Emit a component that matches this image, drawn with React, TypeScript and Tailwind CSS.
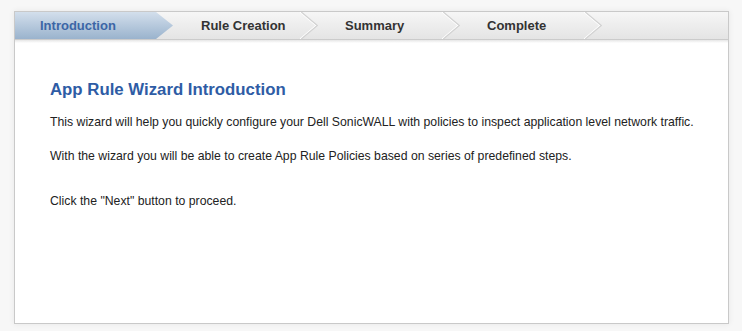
import React from "react";

const steps = [
  { label: "Introduction", w: "w-[158px]", pl: "pl-[25px]", active: true },
  { label: "Rule Creation", w: "w-[145px]", pl: "pl-[28px]", active: false },
  { label: "Summary", w: "w-[142px]", pl: "pl-[27px]", active: false },
  { label: "Complete", w: "w-[142px]", pl: "pl-[27px]", active: false },
];

function Chevron() {
  return (
    <svg width="18" height="27" viewBox="0 0 18 27" className="shrink-0">
      <polyline points="0,0 16,13.5 0,27" fill="none" stroke="#ffffff" strokeWidth="1.2" />
      <polyline points="1.3,0 17.3,13.5 1.3,27" fill="none" stroke="#d2d2d2" strokeWidth="1.2" />
    </svg>
  );
}

export default function App() {
  return (
    <div className="w-[742px] h-[331px] bg-[#f7f7f7] pt-[11px] pl-[14px] overflow-hidden" style={{ fontFamily: '"Liberation Sans", Arial, sans-serif' }}>
      <div className="w-[715px] h-[313px] border border-[#c9c9c9] bg-white shadow-[0_0_6px_rgba(0,0,0,0.07)] flex flex-col">
        <div className="h-[28px] flex border-b border-[#cbcbcb] bg-[linear-gradient(#f6f6f6,#e4e4e4)]">
          {steps.map((s) =>
            s.active ? (
              <div
                key={s.label}
                className={`${s.w} ${s.pl} h-[27px] flex items-center text-[13px] font-bold text-[#3c66a6] bg-[linear-gradient(#d3dfec,#9ab3cd)] [clip-path:polygon(0_0,calc(100%-17px)_0,100%_50%,calc(100%-17px)_100%,0_100%)]`}
              >
                {s.label}
              </div>
            ) : (
              <div key={s.label} className={`${s.w} h-[27px] flex items-center justify-between text-[13px] font-bold text-[#333333]`}>
                <span className={s.pl}>{s.label}</span>
                <Chevron />
              </div>
            )
          )}
        </div>
        <div className="h-[3px] bg-[linear-gradient(#e6e6e6,#ffffff)]" />
        <div className="pl-[35px] pt-[37px] text-[12.25px] leading-[14px] text-[#222222]">
          <h1 className="text-[16.8px] leading-[20px] font-bold text-[#2e5ca5]">App Rule Wizard Introduction</h1>
          <p className="mt-[15px]">
            This wizard will help you quickly configure your Dell SonicWALL with policies to inspect application level network traffic.
          </p>
          <p className="mt-[20px]">With the wizard you will be able to create App Rule Policies based on series of predefined steps.</p>
          <p className="mt-[31px]">Click the "Next" button to proceed.</p>
        </div>
      </div>
    </div>
  );
}
